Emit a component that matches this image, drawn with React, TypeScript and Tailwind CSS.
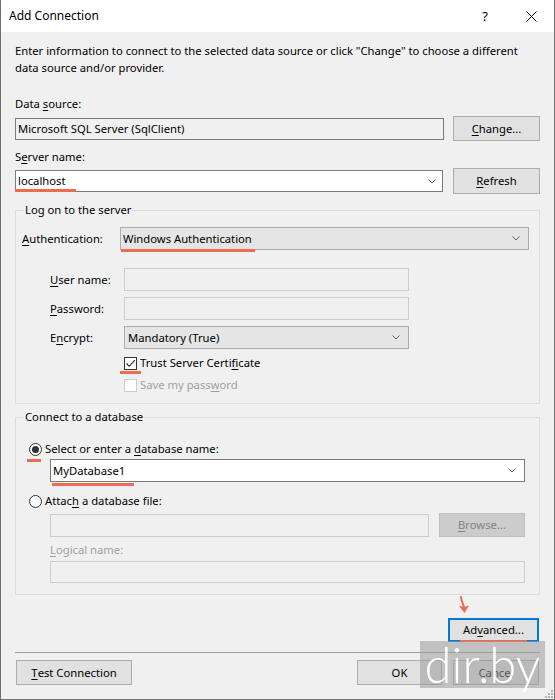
import type { ReactNode } from "react";

function U({ children }: { children: string }) {
  return <span className="underline decoration-[1px] underline-offset-[2px]">{children}</span>;
}

function Chevron() {
  return (
    <svg width="8" height="5" viewBox="0 0 8 5" className="shrink-0">
      <path d="M0.5 0.5 L4 4 L7.5 0.5" fill="none" stroke="#606060" strokeWidth="1" />
    </svg>
  );
}

function Button({
  children,
  className = "",
  disabled = false,
}: {
  children: ReactNode;
  className?: string;
  disabled?: boolean;
}) {
  return (
    <button
      type="button"
      className={`flex shrink-0 items-center justify-center border ${
        disabled ? "border-[#bfbfbf] bg-[#cccccc] text-[#838383]" : "border-[#adadad] bg-[#e1e1e1] text-black"
      } ${className}`}
    >
      {children}
    </button>
  );
}

function Redline({ className }: { className: string }) {
  return <div className={`absolute h-[3px] bg-[#ee6a50] ${className}`} />;
}

export default function App() {
  return (
    <div className="relative flex h-[700px] w-[555px] flex-col border border-t-0 border-[#6e6e6e] bg-[#f0f0f0] font-['Noto_Sans',sans-serif] text-[11.25px] leading-[16px] text-black">
      {/* title bar */}
      <div className="flex h-[32px] shrink-0 items-center bg-white text-[12px]">
        <div className="flex-1 pl-[8px]">Add Connection</div>
        <div className="flex h-full w-[46px] items-center justify-center text-[13px]">?</div>
        <div className="flex h-full w-[46px] items-center justify-center">
          <svg width="11" height="11" viewBox="0 0 11 11">
            <path d="M0.5 0.5 L10.5 10.5 M10.5 0.5 L0.5 10.5" stroke="#000" strokeWidth="1" />
          </svg>
        </div>
      </div>

      <div className="flex flex-1 flex-col px-[14px]">
        <p className="mt-[10px] leading-[17px]">
          <span className="whitespace-nowrap">
            Enter information to connect to the selected data source or click "Change" to choose a different
          </span>
          <br />
          data source and/or provider.
        </p>

        <div className="mt-[20px]">
          Data <U>s</U>ource:
        </div>
        <div className="mt-[4px] flex h-[25px] items-center gap-[9px]">
          <div className="flex h-[22px] flex-1 items-center border border-[#7a7a7a] bg-[#f0f0f0] pl-[2px]">
            Microsoft SQL Server (SqlClient)
          </div>
          <Button className="h-[25px] w-[87px]">
            <U>C</U>hange...
          </Button>
        </div>

        <div className="mt-[8px]">
          S<U>e</U>rver name:
        </div>
        <div className="mt-[3px] flex h-[26px] items-center gap-[10px]">
          <div className="flex h-[22px] flex-1 items-center border border-[#7a7a7a] bg-white pl-[2px] pr-[6px]">
            <span className="flex-1">localhost</span>
            <Chevron />
          </div>
          <Button className="h-[26px] w-[87px]">
            <U>R</U>efresh
          </Button>
        </div>

        <fieldset className="mt-[8px] border border-[#dcdcdc] pb-[10px]">
          <legend className="ml-[8px] px-[1px] leading-[16px]">Log on to the server</legend>
          <div className="mt-[9px] flex h-[23px] items-center pl-[6px] pr-[10px]">
            <div className="w-[98px] shrink-0">
              <U>A</U>uthentication:
            </div>
            <div className="flex h-[23px] flex-1 items-center border border-[#adadad] bg-[#e5e5e5] pl-[2px] pr-[8px]">
              <span className="flex-1">Windows Authentication</span>
              <Chevron />
            </div>
          </div>
          <div className="mt-[18px] flex h-[23px] items-center pl-[34px]">
            <div className="w-[74px] shrink-0">
              <U>U</U>ser name:
            </div>
            <div className="h-[23px] w-[285px] border border-[#cccccc] bg-[#f0f0f0]" />
          </div>
          <div className="mt-[6px] flex h-[23px] items-center pl-[34px]">
            <div className="w-[74px] shrink-0">
              <U>P</U>assword:
            </div>
            <div className="h-[23px] w-[285px] border border-[#cccccc] bg-[#f0f0f0]" />
          </div>
          <div className="mt-[6px] flex h-[23px] items-center pl-[34px]">
            <div className="w-[74px] shrink-0">
              E<U>n</U>crypt:
            </div>
            <div className="flex h-[23px] w-[285px] items-center border border-[#adadad] bg-[#e5e5e5] pl-[3px] pr-[8px]">
              <span className="flex-1">Mandatory (True)</span>
              <Chevron />
            </div>
          </div>
          <div className="mt-[6px] flex h-[16px] items-center gap-[3px] pl-[108px]">
            <div className="flex h-[13px] w-[13px] items-center justify-center border border-[#333333] bg-white">
              <svg width="11" height="11" viewBox="0 0 11 11">
                <path d="M1.5 5.5 L4.2 8.3 L9.8 2.2" fill="none" stroke="#222" strokeWidth="1.1" />
              </svg>
            </div>
            <span>
              Trust Server Certi<U>f</U>icate
            </span>
          </div>
          <div className="mt-[6px] flex h-[16px] items-center gap-[3px] pl-[108px] text-[#a0a0a0]">
            <div className="h-[13px] w-[13px] border border-[#cccccc] bg-[#fcfcfc]" />
            <span>
              Save my pass<U>w</U>ord
            </span>
          </div>
        </fieldset>

        <fieldset className="mt-[5px] border border-[#dcdcdc] pb-[11px]">
          <legend className="ml-[8px] px-[1px] leading-[16px]">Connect to a database</legend>
          <div className="mt-[16px] flex h-[16px] items-center gap-[3px] pl-[13px]">
            <div className="flex h-[13px] w-[13px] items-center justify-center rounded-full border border-[#333333] bg-white">
              <div className="h-[7px] w-[7px] rounded-full bg-[#333333]" />
            </div>
            <span>
              Select or enter a <U>d</U>atabase name:
            </span>
          </div>
          <div className="ml-[34px] mr-[14px] mt-[2px] flex h-[23px] items-center border border-[#7a7a7a] bg-white pl-[2px] pr-[8px]">
            <span className="flex-1">MyDatabase1</span>
            <Chevron />
          </div>
          <div className="mt-[11px] flex h-[16px] items-center gap-[3px] pl-[13px]">
            <div className="h-[13px] w-[13px] rounded-full border border-[#333333] bg-white" />
            <span>
              Attac<U>h</U> a database file:
            </span>
          </div>
          <div className="ml-[34px] mr-[14px] mt-[4px] flex h-[24px] items-center gap-[10px]">
            <div className="h-[23px] flex-1 border border-[#cccccc] bg-[#f0f0f0]" />
            <Button disabled className="h-[24px] w-[86px]">
              <U>B</U>rowse...
            </Button>
          </div>
          <div className="ml-[34px] mt-[5px] text-[#a0a0a0]">
            <U>L</U>ogical name:
          </div>
          <div className="ml-[34px] mr-[14px] mt-[3px] h-[22px] border border-[#cccccc] bg-[#f0f0f0]" />
        </fieldset>

        <div className="mt-[23px] flex justify-end pr-[1px]">
          <button
            type="button"
            className="flex h-[24px] w-[91px] items-center justify-center border-2 border-[#0078d7] bg-[#e1e1e1]"
          >
            Ad<U>v</U>anced...
          </button>
        </div>

        <div className="mt-[10px] h-[1px] bg-[#a0a0a0]" />

        <div className="mt-[7px] flex items-center px-[1px]">
          <Button className="h-[25px] w-[116px]">
            <U>T</U>est Connection
          </Button>
          <div className="flex-1" />
          <Button className="h-[25px] w-[85px]">OK</Button>
          <Button className="ml-[11px] h-[25px] w-[86px]">Cancel</Button>
        </div>
      </div>

      {/* annotations */}
      <Redline className="left-[14px] top-[189px] w-[61px]" />
      <Redline className="left-[120px] top-[249px] w-[134px]" />
      <Redline className="left-[119px] top-[371px] w-[21px]" />
      <Redline className="left-[26px] top-[459px] w-[14px]" />
      <Redline className="left-[51px] top-[483px] w-[82px]" />
      <div className="absolute left-[459px] top-[640px] h-[2px] w-[67px] bg-[#ee6a50]" />
      <svg className="absolute left-[454px] top-[596px]" width="20" height="20" viewBox="0 0 20 20">
        <path d="M6 1 C6 4 8 7 9 12" fill="none" stroke="#ee6a50" strokeWidth="2" strokeLinecap="round" />
        <path d="M4 10 L9.5 17 L14 9.5 C11 11 8 11 4 10 Z" fill="#ee6a50" />
      </svg>

      {/* watermark */}
      <div className="absolute left-[419px] top-[641px] flex h-[47px] w-[125px] items-center justify-center bg-[rgba(155,155,155,0.55)]">
        <span className="font-['Lato',sans-serif] text-[49px] font-light leading-none text-white">dir.by</span>
      </div>

      {/* size grip */}
      <svg className="absolute bottom-[1px] right-[1px]" width="10" height="10" viewBox="0 0 10 10">
        <rect x="8" y="2" width="2" height="2" fill="#b4b4b4" />
        <rect x="5" y="5" width="2" height="2" fill="#b4b4b4" />
        <rect x="8" y="5" width="2" height="2" fill="#b4b4b4" />
        <rect x="2" y="8" width="2" height="2" fill="#b4b4b4" />
        <rect x="5" y="8" width="2" height="2" fill="#b4b4b4" />
        <rect x="8" y="8" width="2" height="2" fill="#b4b4b4" />
      </svg>
    </div>
  );
}
